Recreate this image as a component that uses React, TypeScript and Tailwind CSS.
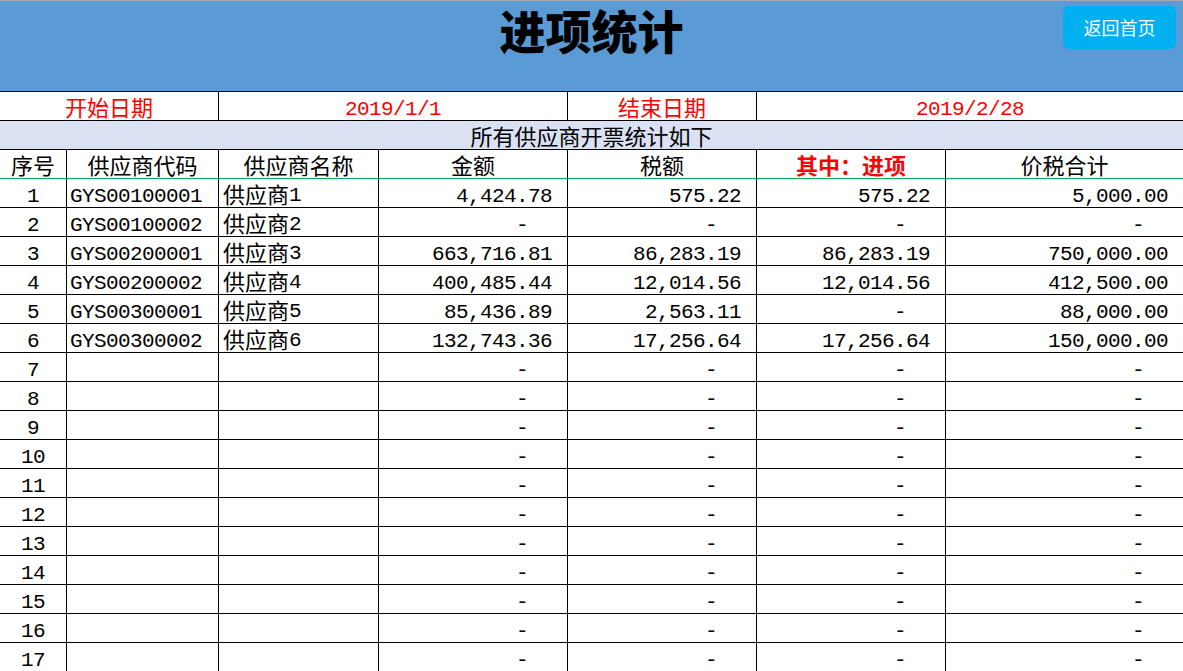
import React from "react";

type Row = [number, string, string, string | null, string | null, string | null, string | null];

const rows: Row[] = [
    [1, "GYS00100001", "供应商1", "4,424.78", "575.22", "575.22", "5,000.00"],
    [2, "GYS00100002", "供应商2", null, null, null, null],
    [3, "GYS00200001", "供应商3", "663,716.81", "86,283.19", "86,283.19", "750,000.00"],
    [4, "GYS00200002", "供应商4", "400,485.44", "12,014.56", "12,014.56", "412,500.00"],
    [5, "GYS00300001", "供应商5", "85,436.89", "2,563.11", null, "88,000.00"],
    [6, "GYS00300002", "供应商6", "132,743.36", "17,256.64", "17,256.64", "150,000.00"],
];

for (let i = 7; i <= 17; i++) rows.push([i, "", "", null, null, null, null]);

const cell = "h-[29px] border-b border-r border-black flex items-center";
// mono text sits high in its line box, so push it down a little
const mono = "font-['Liberation_Mono','Noto_Sans_CJK_SC',monospace] text-[21px] tracking-[-0.6px] pt-[8px]";
const cjk = "font-['Noto_Sans_CJK_SC',sans-serif] text-[22px]";

const Amount = ({value, last}: {value: string | null; last?: boolean}) => (
    <div className={`${cell} justify-end ${mono} ${last ? "border-r-0" : ""} ${value ? "pr-[15px]" : "pr-[39px]"}`}>
        {value ?? "-"}
    </div>
);

const Header = () => (
    <header className="relative h-[92px] border-t border-[#a3abb8] border-b border-b-black bg-[#5b9bd5] flex justify-center">
        <h1 className="leading-[56px] text-[46px] font-black text-black font-['Noto_Sans_CJK_SC',sans-serif]">
            进项统计
        </h1>
        <button className="absolute right-[7px] top-[5px] w-[113px] h-[43px] rounded-[6px] bg-[#00b0f0] text-white text-[18px] font-['Noto_Sans_CJK_SC',sans-serif]">
            返回首页
        </button>
    </header>
);

export default function App() {
    return (
        <div className="w-[1183px] h-[671px] overflow-hidden bg-white text-black">

            <Header/>

            <div className="grid grid-cols-[67px_152px_160px_189px_189px_189px_1fr]">

                {/* date row */}
                <div className={`${cell} col-span-2 justify-center text-[#ff0000] ${cjk}`}>开始日期</div>
                <div className={`${cell} col-span-2 justify-center text-[#ff0000] ${mono}`}>2019/1/1</div>
                <div className={`${cell} justify-center text-[#ff0000] ${cjk}`}>结束日期</div>
                <div className={`${cell} col-span-2 border-r-0 justify-center text-[#ff0000] ${mono}`}>2019/2/28</div>

                {/* summary */}
                <div className={`${cell} col-span-7 border-r-0 justify-center bg-[#d9e1f2] ${cjk}`}>
                    所有供应商开票统计如下
                </div>

                {/* column headers */}
                {["序号", "供应商代码", "供应商名称", "金额", "税额"].map((label) => (
                    <div key={label} className={`${cell} border-b-[#00b050] justify-center ${cjk}`}>{label}</div>
                ))}
                <div className={`${cell} border-b-[#00b050] justify-center font-bold text-[#ff0000] ${cjk}`}>其中：进项</div>
                <div className={`${cell} border-b-[#00b050] border-r-0 justify-center ${cjk}`}>价税合计</div>

                {/* data */}
                {rows.map(([no, code, name, amount, tax, input, total]) => (
                    <React.Fragment key={no}>
                        <div className={`${cell} justify-center ${mono}`}>{no}</div>
                        <div className={`${cell} pl-[3px] ${mono}`}>{code}</div>
                        <div className={`${cell} pl-[4px] ${cjk}`}>
                            {name.slice(0, 3)}
                            <span className="inline-block translate-y-[3px] font-['Liberation_Mono',monospace] text-[21px]">
                                {name.slice(3)}
                            </span>
                        </div>
                        <Amount value={amount}/>
                        <Amount value={tax}/>
                        <Amount value={input}/>
                        <Amount value={total} last/>
                    </React.Fragment>
                ))}

            </div>

        </div>
    );
}
